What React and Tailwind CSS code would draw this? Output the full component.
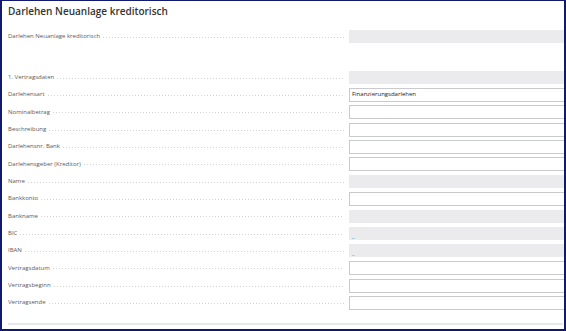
import React from "react";

const rows = [
  { label: "1. Vertragsdaten", kind: "gray" },
  { label: "Darlehensart", kind: "input", value: "Finanzierungsdarlehen" },
  { label: "Nominalbetrag", kind: "input" },
  { label: "Beschreibung", kind: "input" },
  { label: "Darlehensnr. Bank", kind: "input" },
  { label: "Darlehensgeber (Kreditor)", kind: "input" },
  { label: "Name", kind: "gray" },
  { label: "Bankkonto", kind: "input" },
  { label: "Bankname", kind: "gray" },
  { label: "BIC", kind: "gray", value: "_" },
  { label: "IBAN", kind: "gray", value: "_" },
  { label: "Vertragsdatum", kind: "input" },
  { label: "Vertragsbeginn", kind: "input" },
  { label: "Vertragsende", kind: "input" },
];

function Field({ kind, value }) {
  if (kind === "input") {
    return (
      <div className="h-[14px] w-[216px] shrink-0 border border-[#c9cacd] bg-white pl-[2px] flex items-center text-[6px] text-[#222]">
        {value}
      </div>
    );
  }
  return (
    <div className="h-[13px] w-[216px] shrink-0 bg-[#ebebed] pl-[3px] flex items-end pb-[1px] text-[6px] leading-none font-bold text-[#3a9ab0]">
      {value}
    </div>
  );
}

function Row({ label, kind, value }) {
  return (
    <div className="h-[17.33px] flex items-center">
      <div className="w-[337px] shrink-0 flex items-center gap-[3px] pr-[1px]">
        <span className="text-[6px] text-[#5a5a5a] whitespace-nowrap">{label}</span>
        <div className="flex-1 h-[1px] mt-[1px] bg-[linear-gradient(to_right,#d2d2d2_1px,transparent_1px)] bg-[length:3px_1px] bg-repeat-x" />
      </div>
      <div className="ml-[4px]">
        <Field kind={kind} value={value} />
      </div>
    </div>
  );
}

export default function App() {
  return (
    <div className="w-[566px] h-[331px] bg-white border-t border-l-2 border-r-2 border-b-2 border-[#111a6c] overflow-hidden font-['Open_Sans',sans-serif]">
      <div className="pl-[6px] pr-[1px] overflow-hidden">
        <div className="h-[19px] pt-[1px] flex items-center text-[10px] font-semibold text-[#333]">
          Darlehen Neuanlage kreditorisch
        </div>
        <div className="mt-[8px]">
          <Row label="Darlehen Neuanlage kreditorisch" kind="gray" />
        </div>
        <div className="mt-[23.6px]">
          {rows.map((r) => (
            <Row key={r.label} {...r} />
          ))}
        </div>
        <div className="mt-[11.5px] h-[2px] bg-[#e8e8e8]" />
      </div>
    </div>
  );
}
